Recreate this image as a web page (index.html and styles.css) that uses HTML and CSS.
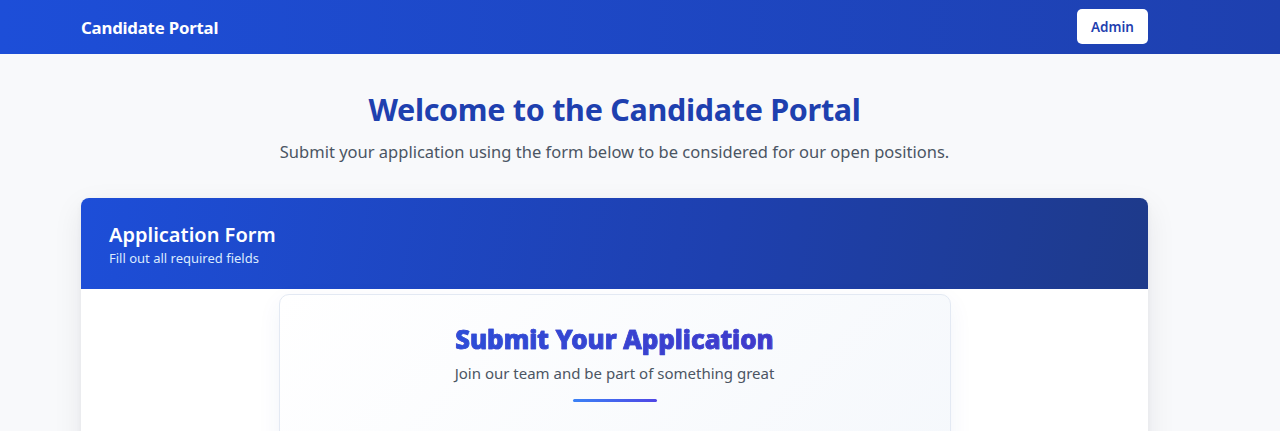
FILE: index.html
```html
<!DOCTYPE html>
<html lang="en">
<head>
<meta charset="utf-8">
<title>Candidate Portal</title>
<link rel="stylesheet" href="styles.css">
</head>
<body>
<header class="navbar">
  <div class="wrap nav-inner">
    <span class="brand">Candidate Portal</span>
    <button class="admin-btn">Admin</button>
  </div>
</header>
<main class="wrap">
  <section class="hero">
    <h1 class="hero-title">Welcome to the Candidate Portal</h1>
    <p class="hero-sub">Submit your application using the form below to be considered for our open positions.</p>
  </section>
  <section class="card">
    <div class="card-head">
      <h2 class="card-title">Application Form</h2>
      <p class="card-sub">Fill out all required fields</p>
    </div>
    <div class="card-body">
      <div class="inner">
        <h3 class="inner-title">Submit Your Application</h3>
        <p class="inner-sub">Join our team and be part of something great</p>
        <div class="bar"></div>
      </div>
    </div>
  </section>
</main>
</body>
</html>
```

FILE: styles.css
```css
* { box-sizing: border-box; }
html, body { margin: 0; padding: 0; }
body {
  font-family: "Noto Sans", "Open Sans", sans-serif;
  background: #f8f9fb;
  height: 431px;
  overflow: hidden;
}
.wrap {
  width: 1067px;
  margin-left: 81px;
}
.navbar {
  height: 54px;
  background: linear-gradient(90deg, #1d4ed8 0%, #1e40af 100%);
}
.nav-inner {
  height: 54px;
  display: flex;
  align-items: center;
  justify-content: space-between;
}
.brand {
  color: #fff;
  font-weight: 700;
  font-size: 16.8px;
  letter-spacing: -0.2px;
}
.admin-btn {
  width: 71px;
  height: 35px;
  margin-top: -1px;
  border: none;
  border-radius: 5px;
  background: #fff;
  color: #1e40af;
  font-family: inherit;
  font-weight: 600;
  font-size: 13.5px;
  padding: 0;
}
.hero {
  text-align: center;
  padding-top: 36px;
}
.hero-title {
  margin: 0;
  font-size: 30.5px;
  font-weight: 700;
  color: #1e40af;
  line-height: 38px;
  letter-spacing: -0.3px;
}
.hero-sub {
  margin: 12px 0 0;
  font-size: 16.5px;
  color: #4b5563;
  line-height: 24px;
}
.card {
  margin-top: 34px;
  border-radius: 8px;
  background: #fff;
  overflow: hidden;
  box-shadow: 0 10px 30px rgba(15, 23, 42, 0.08), 0 2px 6px rgba(15, 23, 42, 0.04);
}
.card-head {
  height: 91px;
  padding: 24px 28px 0;
  background: linear-gradient(100deg, #1d4ed8 0%, #1e40af 60%, #1e3a8a 100%);
  color: #fff;
}
.card-title {
  margin: 0;
  font-size: 20px;
  font-weight: 600;
  line-height: 26px;
}
.card-sub {
  margin: 1px 0 0;
  font-size: 13px;
  line-height: 18px;
  color: #dbeafe;
}
.card-body {
  padding: 5px 0 40px;
  height: 200px;
}
.inner {
  width: 672px;
  margin: 0 auto;
  border: 1px solid #e3e9f3;
  border-radius: 10px;
  background: linear-gradient(135deg, #ffffff 0%, #f5f8fc 100%);
  box-shadow: 0 8px 24px rgba(30, 64, 175, 0.06);
  padding: 28px 20px 60px;
  text-align: center;
}
.inner-title {
  margin: 0;
  font-size: 26px;
  font-weight: 800;
  line-height: 32px;
  background: linear-gradient(90deg, #2b4fd8 0%, #4338ca 100%);
  -webkit-background-clip: text;
  background-clip: text;
  color: transparent;
  -webkit-text-stroke: 0.7px #3a48d2;
  display: inline-block;
}
.inner-sub {
  margin: 7px 0 0;
  font-size: 15px;
  color: #4b5563;
  line-height: 22px;
}
.bar {
  width: 84px;
  height: 3px;
  margin: 15px auto 0;
  border-radius: 2px;
  background: linear-gradient(90deg, #3b82f6 0%, #4f46e5 100%);
}
```
